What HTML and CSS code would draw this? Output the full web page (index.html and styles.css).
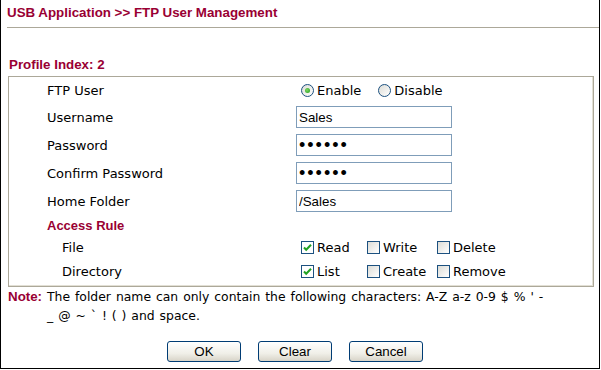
FILE: index.html
```html
<!DOCTYPE html>
<html>
<head>
	<title>FTP User Management</title>
	<meta charset="utf-8" />
	<link rel="stylesheet" href="styles.css">
</head>
<body>
	<div class="frame">
		<div class="title">USB Application &gt;&gt; FTP User Management</div>
		<div class="profile">Profile Index: 2</div>

		<div class="box">
			<div class="row first">
				<div class="label">FTP User</div>
				<div class="value">
					<label class="opt"><span class="radio on"></span>Enable</label>
					<label class="opt gap"><span class="radio"></span>Disable</label>
				</div>
			</div>
			<div class="row">
				<div class="label">Username</div>
				<div class="value"><input type="text" class="field" value="Sales" /></div>
			</div>
			<div class="row">
				<div class="label">Password</div>
				<div class="value"><input type="password" class="field pass" value="123456" /></div>
			</div>
			<div class="row">
				<div class="label">Confirm Password</div>
				<div class="value"><input type="password" class="field pass" value="123456" /></div>
			</div>
			<div class="row">
				<div class="label">Home Folder</div>
				<div class="value"><input type="text" class="field" value="/Sales" /></div>
			</div>
			<div class="row rule">
				<div class="label red">Access Rule</div>
			</div>
			<div class="row sub">
				<div class="label">File</div>
				<div class="value checks">
					<label class="opt"><span class="check on"><svg width="11" height="11" viewBox="0 0 11 11"><path d="M2 5.5 L4.2 7.8 L9 2.8" fill="none" stroke="#21a121" stroke-width="2"/></svg></span>Read</label>
					<label class="opt"><span class="check"></span>Write</label>
					<label class="opt"><span class="check"></span>Delete</label>
				</div>
			</div>
			<div class="row sub last">
				<div class="label">Directory</div>
				<div class="value checks">
					<label class="opt"><span class="check on"><svg width="11" height="11" viewBox="0 0 11 11"><path d="M2 5.5 L4.2 7.8 L9 2.8" fill="none" stroke="#21a121" stroke-width="2"/></svg></span>List</label>
					<label class="opt"><span class="check"></span>Create</label>
					<label class="opt"><span class="check"></span>Remove</label>
				</div>
			</div>
		</div>

		<div class="note">
			<span class="note-tag">Note:</span>
			<span class="note-text">The folder name can only contain the following characters: A-Z a-z 0-9 $ % ' -<br />_ @ ~ ` ! ( ) and space.</span>
		</div>

		<div class="buttons">
			<button class="btn">OK</button>
			<button class="btn">Clear</button>
			<button class="btn">Cancel</button>
		</div>
	</div>
</body>
</html>
```

FILE: styles.css
```css
body {
	margin: 0;
	padding: 0;
	background-color: #ffffff;
}
.frame {
	width: 600px;
	height: 369px;
	box-sizing: border-box;
	border-left: 1px solid #000000;
	border-right: 1px solid #000000;
	border-bottom: 1px solid #000000;
	font-family: "DejaVu Sans", Verdana, sans-serif;
	font-size: 13px;
	color: #000000;
}
/* header */
.title {
	margin-left: 6px;
	height: 28px;
	box-sizing: border-box;
	padding-top: 5px;
	line-height: 15px;
	border-bottom: 1px solid #aca899;
	font-family: "Liberation Sans", Arial, sans-serif;
	font-size: 13.33px;
	font-weight: bold;
	color: #990033;
}
.profile {
	margin: 29px 0 0 8px;
	line-height: 16px;
	font-family: "Liberation Sans", Arial, sans-serif;
	font-size: 13.33px;
	font-weight: bold;
	color: #990033;
}
/* settings box */
.box {
	margin: 3px 5px 0 7px;
	padding: 0 0 3px 38px;
	border: 1px solid #aca899;
	box-shadow: inset -1px -1px 0 #e2dfd4;
}
.row {
	display: flex;
	align-items: center;
	height: 28px;
}
.row.first {
	height: 26px;
}
.row.rule {
	height: 20px;
}
.row.sub {
	height: 24px;
}
.label {
	width: 249px;
	flex: none;
}
.sub .label {
	padding-left: 15px;
	width: 234px;
}
.red {
	font-family: "Liberation Sans", Arial, sans-serif;
	font-weight: bold;
	color: #990033;
}
.value {
	display: flex;
	align-items: center;
}
.field {
	width: 156px;
	height: 22px;
	box-sizing: border-box;
	margin: 0;
	padding: 0 2px;
	border: 1px solid #7f9db9;
	font-family: "Liberation Sans", Arial, sans-serif;
	font-size: 13.33px;
	color: #000000;
	outline: none;
}
.pass {
	letter-spacing: 2px;
	font-size: 18px;
}
/* radios and checkboxes */
.opt {
	display: flex;
	align-items: center;
	gap: 3px;
}
.value > .opt:first-child {
	margin-left: 5px;
}
.opt.gap {
	margin-left: 17px;
}
.radio {
	width: 11px;
	height: 11px;
	border: 1px solid #1c5180;
	border-radius: 50%;
	background: linear-gradient(135deg, #dcdcd6, #ffffff);
	display: flex;
	align-items: center;
	justify-content: center;
}
.radio.on::after {
	content: "";
	width: 5px;
	height: 5px;
	border-radius: 50%;
	background: radial-gradient(circle at 40% 40%, #7ed860, #1e9a1e);
}
.checks {
	display: grid;
	grid-template-columns: 66px 70px auto;
	margin-left: 5px;
}
.checks > .opt:first-child {
	margin-left: 0;
}
.check {
	width: 11px;
	height: 11px;
	border: 1px solid #1c5180;
	background: linear-gradient(135deg, #dcdcd6, #ffffff);
	display: flex;
	align-items: center;
	justify-content: center;
}
.check.on {
	background: #ffffff;
}
/* note */
.note {
	display: flex;
	margin-left: 7px;
	line-height: 19px;
	font-size: 12.4px;
}
.note-tag {
	width: 39px;
	flex: none;
	font-family: "Liberation Sans", Arial, sans-serif;
	font-size: 13.33px;
	font-weight: bold;
	color: #990033;
}
.note-text {
	white-space: nowrap;
	word-spacing: 1px;
}
/* buttons */
.buttons {
	display: flex;
	gap: 17px;
	margin: 16px 0 0 166px;
}
.btn {
	width: 74px;
	height: 21px;
	padding: 0;
	border: 1px solid #003c74;
	border-radius: 3px;
	background: linear-gradient(#ffffff, #f0efe8 60%, #d8d4c8);
	font-family: "Liberation Sans", Arial, sans-serif;
	font-size: 13.33px;
	color: #000000;
}
```
